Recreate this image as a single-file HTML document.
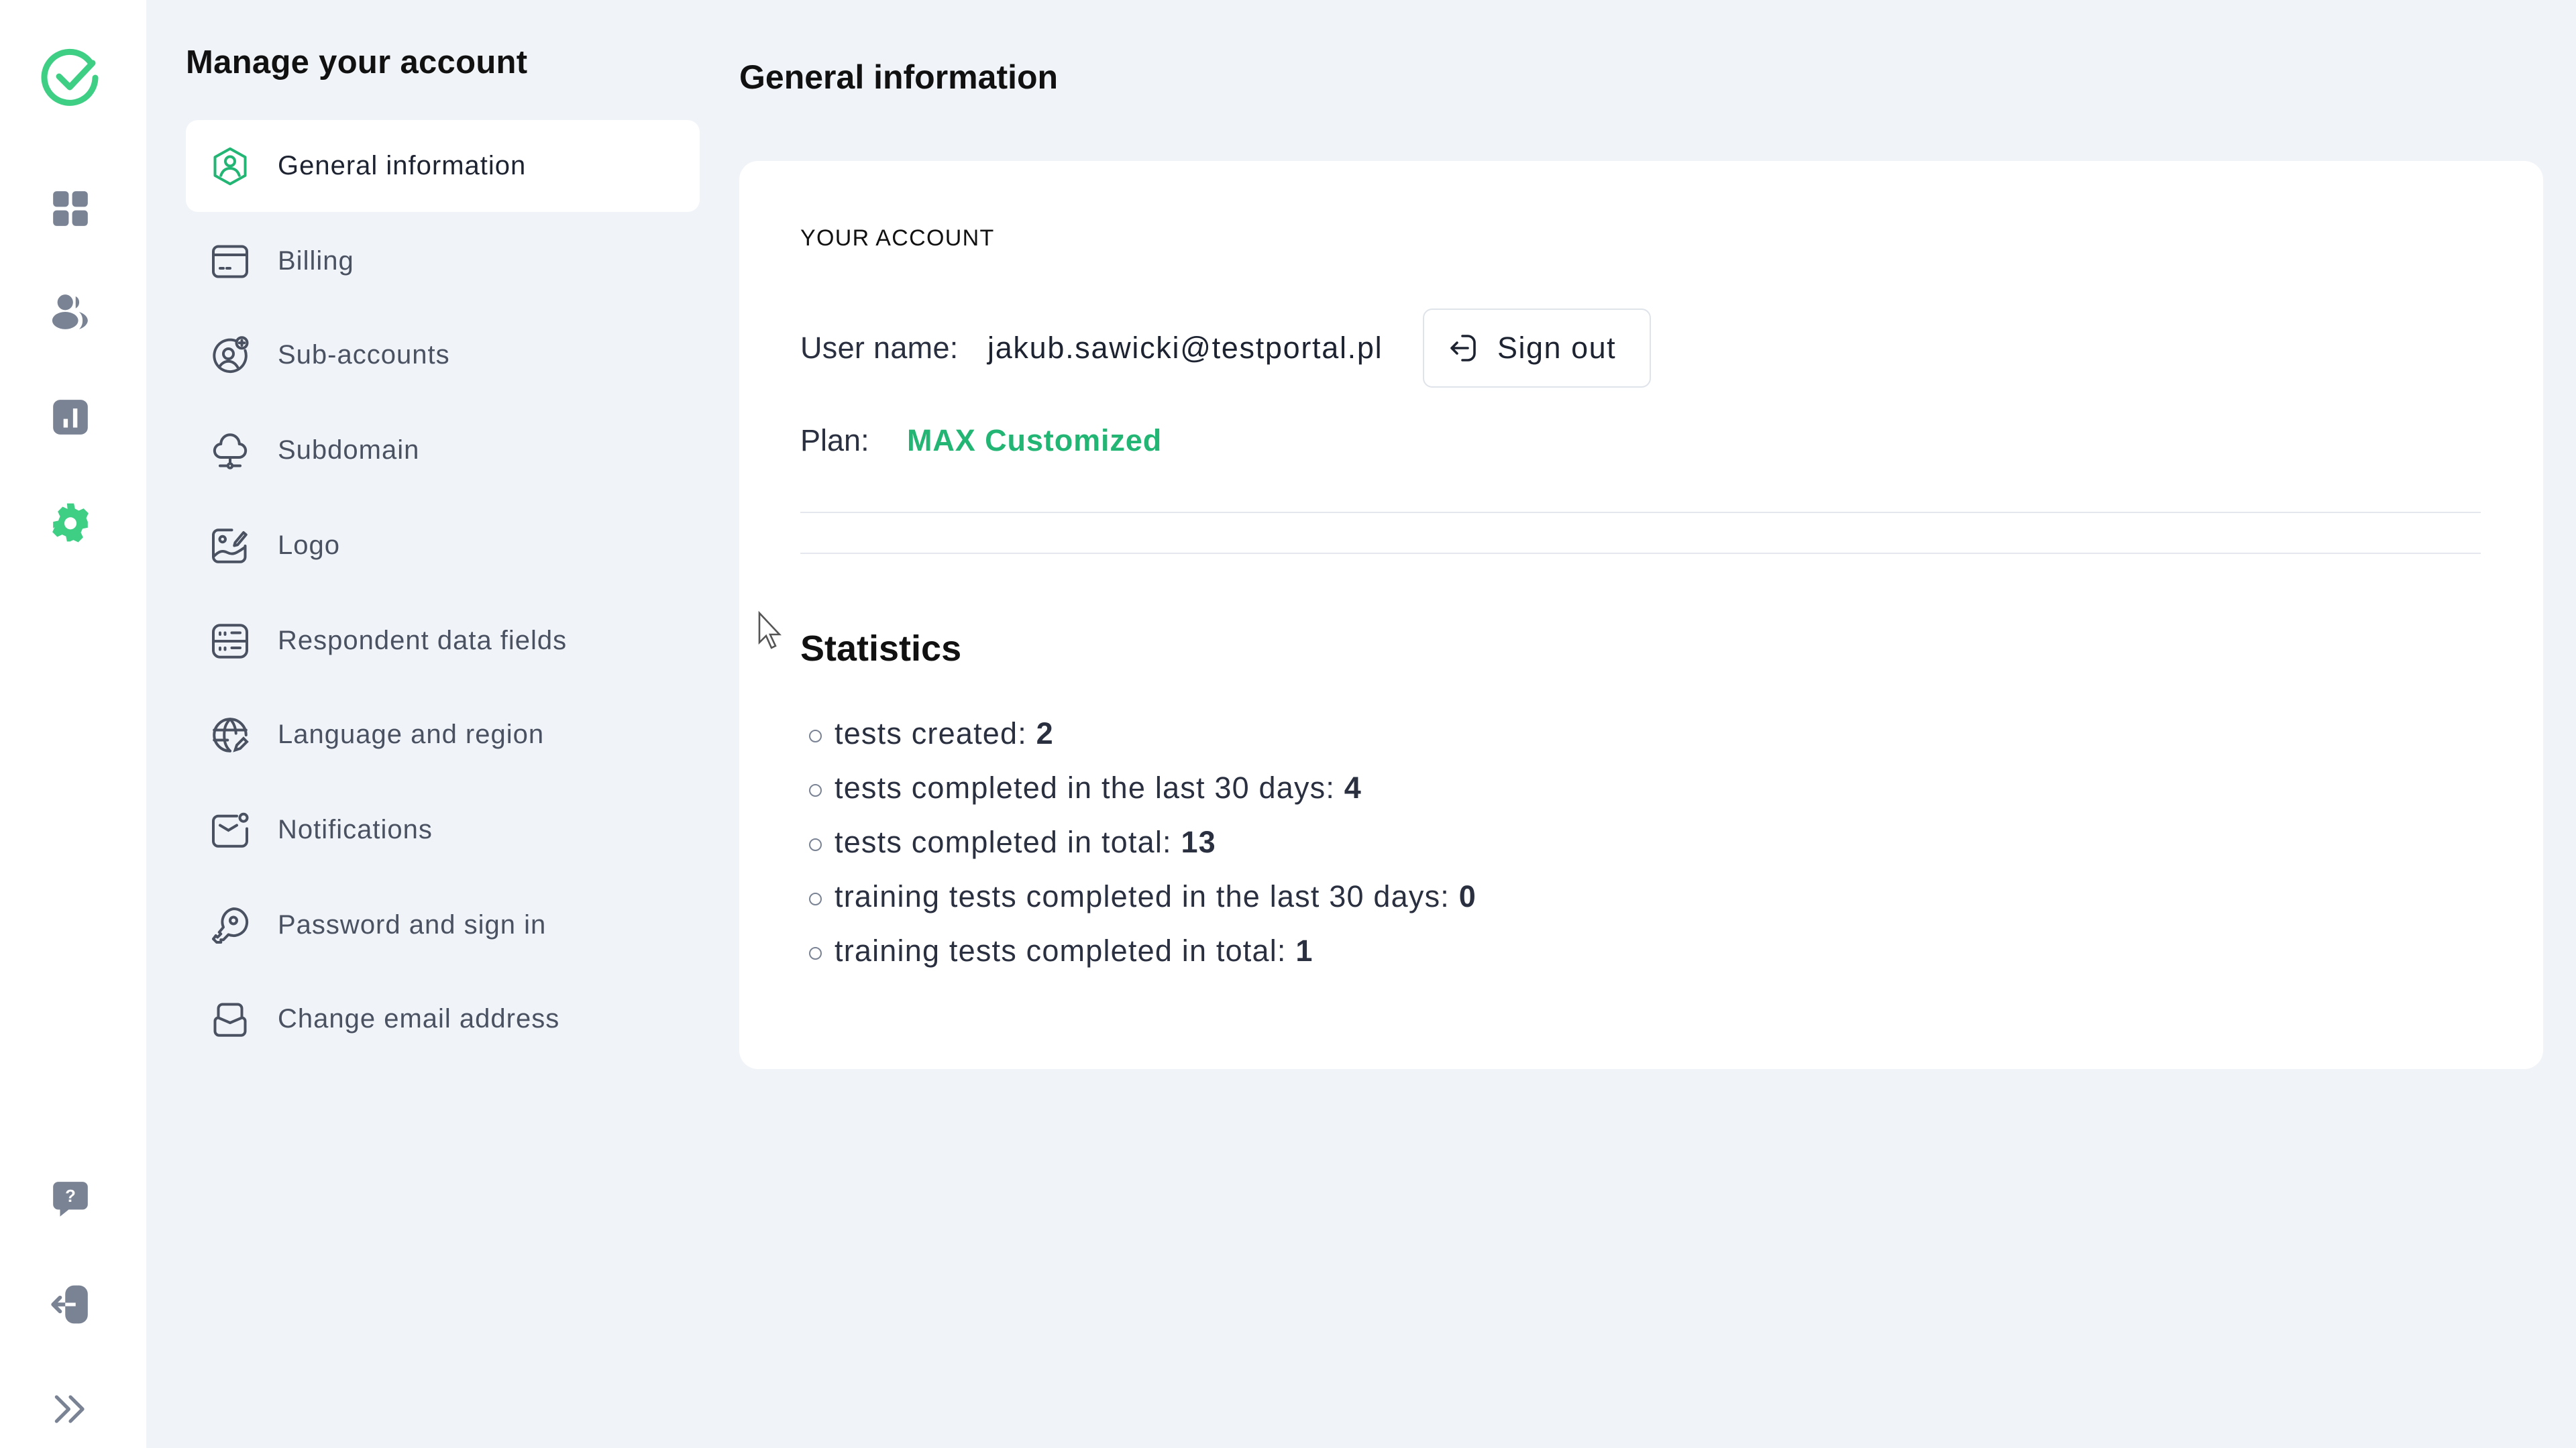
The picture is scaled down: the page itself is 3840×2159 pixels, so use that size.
<!DOCTYPE html>
<html><head><meta charset="utf-8"><style>
*{margin:0;padding:0;box-sizing:border-box}
body{width:3840px;height:2159px;background:#f0f3f8;font-family:"Liberation Sans",sans-serif;position:relative;overflow:hidden;color:#1d2330}
.side{position:absolute;left:0;top:0;width:218px;height:2159px;background:#fff}
.si{position:absolute;left:74px;width:62px;height:62px}
.t{position:absolute;white-space:nowrap}
.item{position:absolute;left:277px;width:766px;height:137px}
.item svg{position:absolute;left:36px;top:39px;width:60px;height:60px}
.item span{position:absolute;left:137px;top:0;line-height:137px;font-size:40px;color:#4a5262;letter-spacing:1px}
.card{position:absolute;left:1102px;top:240px;width:2689px;height:1354px;background:#fff;border-radius:28px}
li{list-style:none;position:absolute;left:1244px;font-size:45px;letter-spacing:1.2px;color:#2a3040}
li:before{content:"";position:absolute;left:-38px;top:20px;width:15px;height:15px;border:2px solid #7a8394;border-radius:50%}
</style></head><body>
<div class="side">
<svg class="si" style="left:58px;top:68px;width:96px;height:96px" viewBox="0 0 48 48"><path d="M38 12A19 19 0 1 0 42 24" fill="none" stroke="#3ecf85" stroke-width="4.5" stroke-linecap="round"/><path d="M15 23l8 8 17-18" fill="none" stroke="#3ecf85" stroke-width="4.5" stroke-linecap="round" stroke-linejoin="round"/></svg>
<svg class="si" style="top:280px" viewBox="0 0 24 24" fill="#7a8394"><rect x="2" y="2" width="9" height="9" rx="2"/><rect x="13" y="2" width="9" height="9" rx="2"/><rect x="2" y="13" width="9" height="9" rx="2"/><rect x="13" y="13" width="9" height="9" rx="2"/></svg>
<svg class="si" style="top:434px" viewBox="0 0 24 24" fill="#7a8394"><circle cx="9" cy="6.5" r="4.5"/><ellipse cx="9" cy="17" rx="7.5" ry="5"/><path d="M15 3a4 4 0 0 1 0 7z"/><path d="M17 12c3 1 5 3 5 5s-2 4-5 5c1.5-1.5 2-3 2-5s-.5-3.5-2-5z"/></svg>
<svg class="si" style="top:591px" viewBox="0 0 24 24"><rect x="2" y="2" width="20" height="20" rx="4" fill="#7a8394"/><rect x="8" y="13" width="2.5" height="5" fill="#fff"/><rect x="13.5" y="7" width="2.5" height="11" fill="#fff"/></svg>
<svg class="si" style="top:748px" viewBox="0 0 24 24"><path fill="#3ecf85" d="M10 1h4l.6 3 2.2 1.2 2.8-1.3 2.8 2.8-1.3 2.8L22 11.6V15l-3 .6-1 2.2 1.3 2.8-2.8 2.8-2.8-1.3-2.2 1L12 23H10l-.6-3-2.2-1-2.8 1.3-2.8-2.8 1.3-2.8L2 15.4V11.6l3-.6L6 8.5 4.7 5.7 7.5 2.9l2.8 1.3L10 1z"/><circle cx="12" cy="12.5" r="3.5" fill="#fff"/></svg>
<svg class="si" style="top:1757px" viewBox="0 0 24 24"><path fill="#7a8394" d="M5 2h14a3 3 0 0 1 3 3v10a3 3 0 0 1-3 3H11l-5 4v-4H5a3 3 0 0 1-3-3V5a3 3 0 0 1 3-3z"/><text x="12" y="13.5" font-size="10" font-weight="bold" fill="#fff" text-anchor="middle" font-family="Liberation Sans">?</text></svg>
<svg class="si" style="top:1914px" viewBox="0 0 24 24"><rect x="9" y="1" width="13" height="22" rx="5" fill="#7a8394"/><path d="M2 12h13M6 8l-4 4 4 4" fill="none" stroke="#7a8394" stroke-width="2.2" stroke-linecap="round" stroke-linejoin="round"/><path d="M9 12h6" stroke="#fff" stroke-width="2"/></svg>
<svg class="si" style="top:2070px" viewBox="0 0 24 24" fill="none" stroke="#7a8394" stroke-width="2" stroke-linecap="round" stroke-linejoin="round"><path d="M4 5l7 7-7 7M12 5l7 7-7 7"/></svg>
</div>

<div class="t" style="left:277px;top:62px;font-size:49px;line-height:62px;color:#111;font-weight:bold;letter-spacing:0.3px">Manage your account</div>
<div style="position:absolute;left:277px;top:179px;width:766px;height:137px;background:#fff;border-radius:18px"></div>
<div class="item" style="top:179px"><svg viewBox="0 0 24 24" fill="none" stroke="#22b573" stroke-width="1.6" stroke-linecap="round" stroke-linejoin="round"><path d="M12 1.5l9 5v11l-9 5-9-5v-11z"/><circle cx="12" cy="9" r="2.8"/><path d="M6.5 17.5c1-3 3-4.3 5.5-4.3s4.5 1.3 5.5 4.3"/></svg><span style="color:#1d2330">General information</span></div>
<div class="item" style="top:321px"><svg viewBox="0 0 24 24" fill="none" stroke="#4a5262" stroke-width="1.6" stroke-linecap="round"><rect x="2" y="3" width="20" height="18" rx="3"/><path d="M2 8h20M6 16h2M10 16h2"/></svg><span>Billing</span></div>
<div class="item" style="top:461px"><svg viewBox="0 0 24 24" fill="none" stroke="#4a5262" stroke-width="1.6" stroke-linecap="round"><path d="M16 3.5A9.5 9.5 0 1 0 21 9"/><circle cx="11" cy="11" r="3"/><path d="M5.5 19c1.5-2.5 3.2-3.5 5.5-3.5s4 1 5.5 3.5"/><circle cx="19" cy="4.5" r="3.2"/><path d="M19 3v3M17.5 4.5h3"/></svg><span>Sub-accounts</span></div>
<div class="item" style="top:603px"><svg viewBox="0 0 24 24" fill="none" stroke="#4a5262" stroke-width="1.6" stroke-linecap="round" stroke-linejoin="round"><path d="M7 16a4 4 0 0 1-.5-8A5.5 5.5 0 0 1 17.5 8a4 4 0 0 1-.5 8z"/><path d="M12 16v4M6 21h12"/><circle cx="12" cy="21" r="1.3" fill="#f0f3f8"/></svg><span>Subdomain</span></div>
<div class="item" style="top:745px"><svg viewBox="0 0 24 24" fill="none" stroke="#4a5262" stroke-width="1.6" stroke-linecap="round" stroke-linejoin="round"><path d="M13 2.5H5A3 3 0 0 0 2 5.5v13a3 3 0 0 0 3 3h13a3 3 0 0 0 3-3V12"/><circle cx="7.5" cy="8" r="1.7"/><path d="M2.5 18c3-3 5-3.5 8-2s5 .5 10-3"/><path d="M15 10l5-6 1.5 1.3-5 6-2 .5z"/></svg><span>Logo</span></div>
<div class="item" style="top:887px"><svg viewBox="0 0 24 24" fill="none" stroke="#4a5262" stroke-width="1.6" stroke-linecap="round"><rect x="2" y="2.5" width="20" height="19" rx="4"/><path d="M2 12h20M6 7v1M9 7v1M13 7h5M6 16v1M9 16v1M13 16h5"/></svg><span>Respondent data fields</span></div>
<div class="item" style="top:1027px"><svg viewBox="0 0 24 24" fill="none" stroke="#4a5262" stroke-width="1.6" stroke-linecap="round"><path d="M21.5 12A9.5 9.5 0 1 0 12 21.5"/><path d="M12 2.5c-3 3-3.5 6-3.5 9.5s.5 6.5 3.5 9.5M12 2.5c2.5 2.5 3.3 5.5 3.5 8.5M2.5 9h19M2.5 15h8"/><path d="M15 21l1-3 4-4 2 2-4 4z"/></svg><span>Language and region</span></div>
<div class="item" style="top:1169px"><svg viewBox="0 0 24 24" fill="none" stroke="#4a5262" stroke-width="1.6" stroke-linecap="round"><path d="M16 3.5H5A3 3 0 0 0 2 6.5v12a3 3 0 0 0 3 3h14a3 3 0 0 0 3-3V11"/><path d="M6 9l5 3 5-3"/><circle cx="20" cy="4.5" r="2.2"/></svg><span>Notifications</span></div>
<div class="item" style="top:1311px"><svg viewBox="0 0 24 24" fill="none" stroke="#4a5262" stroke-width="1.6" stroke-linecap="round" stroke-linejoin="round"><path d="M14 2a8 8 0 1 1-3 15.4L8 20.5H6.5v1.5L4 22l-2-2 1.5-2 1 1 2-2-1-1L8 13A8 8 0 0 1 14 2z"/><circle cx="14" cy="9" r="2"/></svg><span>Password and sign in</span></div>
<div class="item" style="top:1451px"><svg viewBox="0 0 24 24" fill="none" stroke="#4a5262" stroke-width="1.6" stroke-linecap="round" stroke-linejoin="round"><path d="M5 11V5.5A2.5 2.5 0 0 1 7.5 3h9A2.5 2.5 0 0 1 19 5.5V11"/><path d="M3 13a2 2 0 0 1 2-2l7 3 7-3a2 2 0 0 1 2 2v6a2.5 2.5 0 0 1-2.5 2.5h-13A2.5 2.5 0 0 1 3 19z"/></svg><span>Change email address</span></div>

<div class="t" style="left:1102px;top:84px;font-size:50px;line-height:62px;color:#111;font-weight:bold">General information</div>
<div class="card"></div>
<div class="t" style="left:1193px;top:334px;font-size:34px;line-height:42px;letter-spacing:1.3px;color:#111">YOUR ACCOUNT</div>
<div class="t" style="left:1193px;top:490px;font-size:45px;line-height:58px;color:#2a3040;letter-spacing:0.3px">User name:</div>
<div class="t" style="left:1472px;top:490px;font-size:45px;line-height:58px;color:#1d2330;letter-spacing:1.7px">jakub.sawicki@testportal.pl</div>
<div style="position:absolute;left:2121px;top:460px;width:340px;height:118px;border:2px solid #dfe3ea;border-radius:14px;background:#fff"></div>
<svg style="position:absolute;left:2158px;top:495px;width:48px;height:48px" viewBox="0 0 24 24" fill="none" stroke="#1d2330" stroke-width="1.8" stroke-linecap="round" stroke-linejoin="round"><path d="M11 3h4a5 5 0 0 1 5 5v8a5 5 0 0 1-5 5h-4"/><path d="M15 12H3M7 8l-4 4 4 4"/></svg>
<div class="t" style="left:2232px;top:490px;font-size:45px;line-height:58px;color:#1d2330;letter-spacing:1.5px">Sign out</div>
<div class="t" style="left:1193px;top:628px;font-size:45px;line-height:58px;color:#2a3040">Plan:</div>
<div class="t" style="left:1352px;top:628px;font-size:45px;line-height:58px;color:#22b573;font-weight:bold;letter-spacing:0.9px">MAX Customized</div>
<div style="position:absolute;left:1193px;top:763px;width:2505px;height:2px;background:#e4e7ed"></div>
<div style="position:absolute;left:1193px;top:824px;width:2505px;height:2px;background:#e4e7ed"></div>
<svg style="position:absolute;left:1128px;top:910px;width:40px;height:60px" viewBox="0 0 20 30"><path d="M2 2v22l5-5 4 9 3-1.5-4-8.5h7z" fill="#fff" stroke="#555" stroke-width="1.3"/></svg>
<div class="t" style="left:1193px;top:934px;font-size:54px;line-height:66px;color:#111;font-weight:bold">Statistics</div>
<ul>
<li style="top:1068px">tests created: <b>2</b></li>
<li style="top:1149px">tests completed in the last 30 days: <b>4</b></li>
<li style="top:1230px">tests completed in total: <b>13</b></li>
<li style="top:1311px">training tests completed in the last 30 days: <b>0</b></li>
<li style="top:1392px">training tests completed in total: <b>1</b></li>
</ul>
</body></html>
